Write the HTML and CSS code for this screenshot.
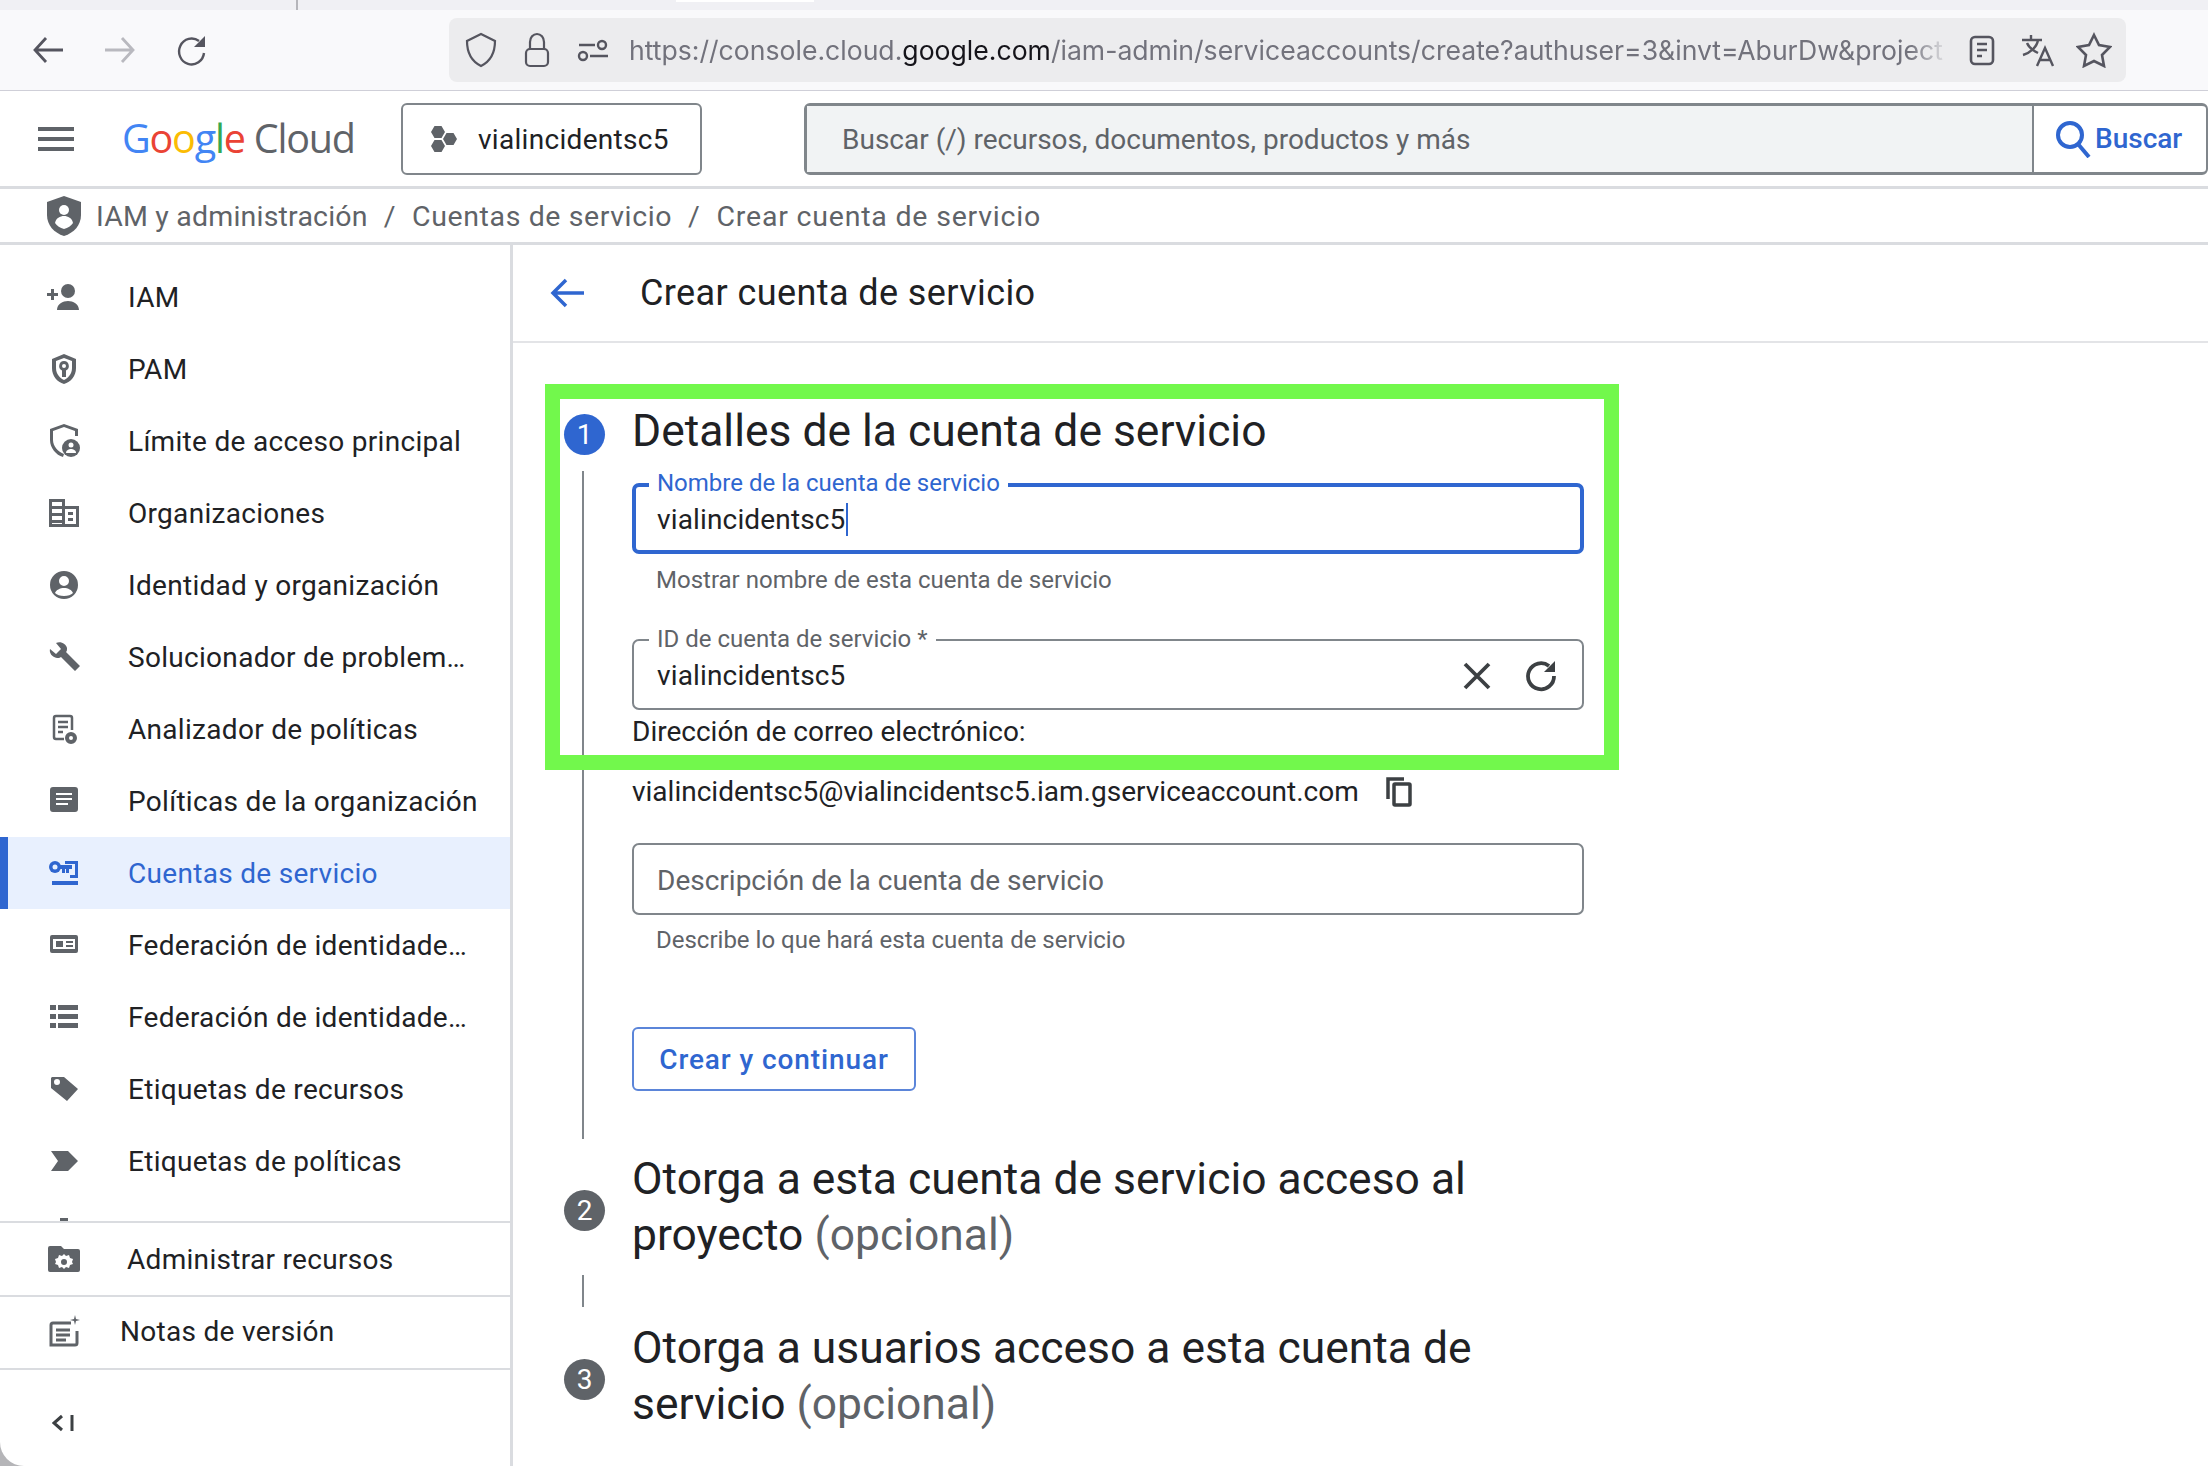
FILE: index.html
```html
<!DOCTYPE html>
<html lang="es">
<head>
    <meta charset="UTF-8">
    <title>Crear cuenta de servicio</title>
    <link rel="stylesheet" href="styles.css">
</head>
<body>
<div id="window">
    <div class="tabstrip"><span class="tab-sep"></span><span class="tab-white"></span></div>

    <div class="toolbar">
        <div class="nav-btns">
            <svg class="ic36" viewBox="0 0 36 36" fill="none" stroke="#55555f" stroke-width="2.8"><path d="M33 18H6M16 6 5 18l11 12"/></svg>
            <svg class="ic36" viewBox="0 0 36 36" fill="none" stroke="#b9b9bf" stroke-width="2.8"><path d="M3 18h27M20 6l11 12-11 12"/></svg>
            <svg class="ic36" viewBox="0 0 36 36" fill="none" stroke="#55555f" stroke-width="2.4"><path d="M30 21a12.500 13 0 1 1-5-12"/><path d="M31 4v11H20z" fill="#55555f" stroke="none"/></svg>
        </div>
        <div class="urlbar">
            <svg class="ic36" viewBox="0 0 36 36" fill="none" stroke="#55555f" stroke-width="2.2"><path d="M18 2 4 9c0 11 4 20 14 25 10-5 14-14 14-25z"/></svg>
            <svg class="ic36" viewBox="0 0 36 36" fill="none" stroke="#55555f" stroke-width="2.2"><path d="M11 17v-7a7 8 0 0 1 14 0v7"/><rect x="7" y="17" width="22" height="17" rx="4"/></svg>
            <svg class="ic36" viewBox="0 0 36 36" fill="none" stroke="#55555f" stroke-width="2.4"><path d="M4 13h16M15 24h18"/><circle cx="27" cy="13" r="4"/><circle cx="8" cy="24" r="4"/></svg>
            <div class="url"><span>https://console.cloud.</span><b>google.com</b><span>/iam-admin/serviceaccounts/create?authuser=3&amp;invt=AburDw&amp;project</span></div>
            <svg class="ic36" viewBox="0 0 36 36" fill="none" stroke="#55555f" stroke-width="2.6"><rect x="7" y="5" width="22" height="27" rx="4"/><path d="M13 12h10M13 18h10M13 24h5"/></svg>
            <svg class="ic36" viewBox="0 0 36 36" fill="none" stroke="#55555f" stroke-width="2.4"><path d="M2 8h20M11 3v5M18 8c-1 7-8 13-15 15M7 11c2 5 7 8 11 10M17 34l8-18 8 18M20 28h10"/></svg>
            <svg class="ic36" viewBox="0 0 36 36" fill="none" stroke="#55555f" stroke-width="2.6"><path d="m18 3 5 10 11 2-8 8 2 11-10-5-10 5 2-11-8-8 11-2z"/></svg>
        </div>
    </div>

    <div class="header">
        <svg class="menu" viewBox="0 0 36 24" fill="#5f6368"><path d="M0 0h36v4H0zM0 10h36v4H0zM0 20h36v4H0z"/></svg>
        <div class="logo"><i class="g-b">G</i><i class="g-r">o</i><i class="g-y">o</i><i class="g-b">g</i><i class="g-g">l</i><i class="g-r">e</i> <span>Cloud</span></div>
        <div class="project">
            <svg width="26" height="28" viewBox="0 0 26 28" fill="#5f6368"><path d="M3.500 1h7l3.500 6-3.500 6h-7L0 7zM15.500 8h7l3.500 6-3.500 6h-7L12 14zM3.500 15h7l3.500 6-3.500 6h-7L0 21z"/></svg>
            <span>vialincidentsc5</span>
        </div>
        <div class="search">
            <div class="search-input">Buscar (/) recursos, documentos, productos y más</div>
            <div class="search-btn">
                <svg width="36" height="38" viewBox="0 0 36 38" fill="none" stroke="#2f66d0" stroke-width="4"><circle cx="15" cy="15" r="12"/><path d="m23 24 11 13"/></svg>
                <span>Buscar</span>
            </div>
        </div>
    </div>

    <div class="crumbs">
        <svg width="34" height="40" viewBox="0 0 34 40"><path fill="#5f6368" d="M17 0 0 6v13c0 10 7 18 17 21 10-3 17-11 17-21V6z"/><circle cx="17" cy="14" r="5" fill="#fff"/><path fill="#fff" d="M8 27c1-5 5-7 9-7s8 2 9 7c-2 3-5 5-9 6-4-1-7-3-9-6z"/></svg>
        <span class="crumb-first">IAM y administración</span><em>/</em><span>Cuentas de servicio</span><em>/</em><span class="crumb-last">Crear cuenta de servicio</span>
    </div>

    <div class="body">
        <div class="side">
            <div class="side-list">
                <div class="side-item"><svg class="ic" viewBox="0 0 34 26" fill="#5f6368"><circle cx="21" cy="7" r="7"/><path d="M10 26c0-6 6-9 11-9s11 3 11 9zM0 9h4V5h3v4h4v3H7v4H4v-4H0z"/></svg><span>IAM</span></div>
                <div class="side-item"><svg class="ic" viewBox="0 0 34 34" fill="#5f6368"><path fill-rule="evenodd" d="M17 2 5 7v9c0 8 5 14 12 16 7-2 12-8 12-16V7zm0 4 8 3v7c0 6-4 10-8 12-4-2-8-6-8-12V9z"/><path fill-rule="evenodd" d="M17 9a5 5 0 0 1 2 9.500V25h-4v-6.500A5 5 0 0 1 17 9zm0 3a2 2 0 1 0 0 4 2 2 0 0 0 0-4z"/></svg><span>PAM</span></div>
                <div class="side-item"><svg class="ic" viewBox="0 0 34 34" fill="#5f6368"><path d="M17 0 3 5v11c0 8 6 15 13 17l1-3c-6-2-11-8-11-14V7l11-4 11 4v5h3V5z"/><circle cx="24" cy="24" r="9"/><circle cx="24" cy="21" r="2.500" fill="#fff"/><path fill="#fff" d="M19 29c0-3 3-4 5-4s5 1 5 4z"/></svg><span>Límite de acceso principal</span></div>
                <div class="side-item"><svg class="ic" viewBox="0 0 34 34" fill="#5f6368"><path fill-rule="evenodd" d="M2 3h16v7h14v21H2zm3 3v4h10V6zm0 7v4h10v-4zm0 7v4h10v-4zm0 7v1h10v-1zm13-14v15h11V13zm3 3h5v3h-5zm0 6h5v3h-5z"/></svg><span>Organizaciones</span></div>
                <div class="side-item"><svg class="ic" viewBox="0 0 34 34" fill="#5f6368"><path fill-rule="evenodd" d="M17 3a14 14 0 1 1 0 28 14 14 0 0 1 0-28zm0 5a5 5 0 1 0 0 10 5 5 0 0 0 0-10zM8 25c2 2 5 3 9 3s7-1 9-3c-1-3-5-5-9-5s-8 2-9 5z"/></svg><span>Identidad y organización</span></div>
                <div class="side-item"><svg class="ic" viewBox="0 0 34 34" fill="#5f6368"><path d="M3 9l6 5 5-5-5-6c5-2 10 1 11 5 0 2 0 3-1 4l14 14-5 5-14-14c-1 1-3 1-4 1-5-1-8-5-7-9z"/></svg><span>Solucionador de problem…</span></div>
                <div class="side-item"><svg class="ic" viewBox="0 0 34 34" fill="none" stroke="#5f6368" stroke-width="2.500"><path d="M17 27H9a2 2 0 0 1-2-2V6a2 2 0 0 1 2-2h14a2 2 0 0 1 2 2v12M11 10h10M11 15h10M11 20h5"/><circle cx="24" cy="26" r="4" stroke-width="4"/></svg><span>Analizador de políticas</span></div>
                <div class="side-item"><svg class="ic" viewBox="0 0 34 34" fill="#5f6368"><path fill-rule="evenodd" d="M6 3h22a3 3 0 0 1 3 3v19a3 3 0 0 1-3 3H6a3 3 0 0 1-3-3V6a3 3 0 0 1 3-3zm3 6v2h16V9zm0 5v2h16v-2zm0 5v2h12v-2z"/></svg><span>Políticas de la organización</span></div>
                <div class="side-item on"><svg class="ic" viewBox="0 0 34 34" fill="#2f66d0"><path d="M18 5h13v17h-8v-3h5V8H18zM5 25h26v4H5z"/><circle cx="8" cy="11" r="6"/><circle cx="8" cy="11" r="2.500" fill="#e8f0fe"/><path d="M13 9h12v4h-3v4h-3v-4h-1v4h-3v-4h-2z"/></svg><span>Cuentas de servicio</span></div>
                <div class="side-item"><svg class="ic" viewBox="0 0 34 34" fill="#5f6368"><path fill-rule="evenodd" d="M5 7h24a2 2 0 0 1 2 2v14a2 2 0 0 1-2 2H5a2 2 0 0 1-2-2V9a2 2 0 0 1 2-2zm1 4v10h22V11zm3 2h7v6H9zm10 0h7v2h-7zm0 4h7v2h-7z"/></svg><span>Federación de identidade…</span></div>
                <div class="side-item"><svg class="ic" viewBox="0 0 34 34" fill="#5f6368"><path d="M3 5h6v5H3zM11 5h20v5H11zM3 14h6v5H3zM11 14h20v5H11zM3 23h6v5H3zM11 23h20v5H11z"/></svg><span>Federación de identidade…</span></div>
                <div class="side-item"><svg class="ic" viewBox="0 0 34 34" fill="#5f6368"><path fill-rule="evenodd" d="M5 5h12l14 12-11 12L4 16V6zm5 2a3 3 0 1 0 0 6 3 3 0 0 0 0-6z"/></svg><span>Etiquetas de recursos</span></div>
                <div class="side-item"><svg class="ic" viewBox="0 0 34 34" fill="#5f6368"><path d="M4 7h17l10 10-10 10H4l7-10z"/></svg><span>Etiquetas de políticas</span></div>
                <div class="side-item"><svg class="ic" viewBox="0 0 34 34" fill="#5f6368"><path d="M13 2h8v6h-8z"/></svg><span>Configuración</span></div>
            </div>
            <div class="side-foot">
                <svg class="ic" viewBox="0 0 34 34" fill="#5f6368"><path fill-rule="evenodd" d="M3 4h11l3 3h14a2 2 0 0 1 2 2v19a2 2 0 0 1-2 2H3a2 2 0 0 1-2-2V6a2 2 0 0 1 2-2zm14 8-2 2-3-1-1 3-3 1 1 3-1 2 3 1 1 3 3-1 2 2 2-2 3 1 1-3 3-1-1-2 1-3-3-1-1-3-3 1zm0 5a3 3 0 1 1 0 6 3 3 0 0 1 0-6z"/></svg>
                <span>Administrar recursos</span>
            </div>
            <div class="side-foot notes">
                <svg class="ic" viewBox="0 0 34 34" fill="none" stroke="#5f6368" stroke-width="3"><path d="M24 8H6a2 2 0 0 0-2 2v20h24a2 2 0 0 0 2-2V16M9 15h14M9 20h14M9 25h10"/><path d="m28 0 1 4 4 1-4 1-1 4-1-4-4-1 4-1z" fill="#5f6368" stroke="none"/></svg>
                <span>Notas de versión</span>
            </div>
            <div class="collapse">
                <svg width="22" height="18" viewBox="0 0 22 18" fill="none" stroke="#3c4043" stroke-width="3"><path d="M10 2 2 9l8 7M20 1v16"/></svg>
            </div>
        </div>

        <div class="main">
            <div class="page-title">
                <svg width="36" height="36" viewBox="0 0 36 36" fill="none" stroke="#2f66d0" stroke-width="3.500"><path d="M34 18H3M16 5 3 18l13 13"/></svg>
                <h1>Crear cuenta de servicio</h1>
            </div>

            <div class="stepper">
                <div class="step-head">
                    <div class="num num-on">1</div>
                    <h2>Detalles de la cuenta de servicio</h2>
                </div>
                <div class="step-body">
                    <div class="field focus">
                        <label>Nombre de la cuenta de servicio</label>
                        <div class="value">vialincidentsc5<span class="caret"></span></div>
                    </div>
                    <div class="hint hint1">Mostrar nombre de esta cuenta de servicio</div>
                    <div class="field f2">
                        <label>ID de cuenta de servicio *</label>
                        <div class="value">vialincidentsc5</div>
                        <svg class="fld-ic" viewBox="0 0 36 36" fill="none" stroke="#3c4043" stroke-width="3.800"><path d="m6 6 24 24M30 6 6 30"/></svg>
                        <svg class="fld-ic" viewBox="0 0 36 36" fill="none" stroke="#3c4043" stroke-width="3.800"><path d="M31 18a13 13 0 1 1-5-10"/><path d="M32 3v11H21z" fill="#3c4043" stroke="none"/></svg>
                    </div>
                    <div class="mail-label">Dirección de correo electrónico:</div>
                    <div class="mail">
                        <span>vialincidentsc5@vialincidentsc5.iam.gserviceaccount.com</span>
                        <svg width="28" height="30" viewBox="0 0 28 30" fill="none" stroke="#3c4043" stroke-width="3.500"><path d="M2 22V2h16"/><rect x="8" y="7" width="16" height="21" rx="1"/></svg>
                    </div>
                    <div class="field f3"><div class="value ph">Descripción de la cuenta de servicio</div></div>
                    <div class="hint hint3">Describe lo que hará esta cuenta de servicio</div>
                    <button class="btn">Crear y continuar</button>
                </div>
                <div class="step-head two">
                    <div class="num">2</div>
                    <h2>Otorga a esta cuenta de servicio acceso al proyecto <span>(opcional)</span></h2>
                </div>
                <div class="step-gap"></div>
                <div class="step-head two">
                    <div class="num">3</div>
                    <h2>Otorga a usuarios acceso a esta cuenta de servicio <span>(opcional)</span></h2>
                </div>
            </div>

            <div class="green-box"></div>
        </div>
    </div>
</div>
</body>
</html>
```

FILE: styles.css
```css
*{
    margin: 0;
    padding: 0;
    box-sizing: border-box;
}
html, body{
    width: 2208px;
    height: 1466px;
    overflow: hidden;
    background: #b5b5b8;
}
#window{
    width: 2208px;
    height: 1466px;
    background: #fff;
    border-bottom-left-radius: 24px;
    overflow: hidden;
    font-family: Roboto, "Liberation Sans", sans-serif;
    color: #202124;
    display: flex;
    flex-direction: column;
}

/* browser chrome */
.tabstrip{
    height: 10px;
    background: #f0f0f4;
    display: flex;
    padding-left: 296px;
}
.tab-sep{
    width: 2px;
    height: 10px;
    background: #b5b5ba;
}
.tab-white{
    width: 138px;
    height: 2px;
    margin-left: 378px;
    background: #fff;
}
.toolbar{
    height: 81px;
    background: #f9f9fb;
    border-bottom: 1px solid #cfcfd8;
    display: flex;
    align-items: center;
    padding: 0 82px 0 30px;
}
.ic36{
    width: 36px;
    height: 36px;
    flex: none;
}
.nav-btns{
    display: flex;
    gap: 36px;
    width: 419px;
}
.urlbar{
    flex: 1;
    height: 64px;
    background: #ececee;
    border-radius: 8px;
    display: flex;
    align-items: center;
    padding: 0 14px;
    gap: 20px;
}
.url{
    width: 1320px;
    flex: none;
    margin: 0 -5px 0 -2px;
    white-space: nowrap;
    overflow: hidden;
    font-family: Inter, sans-serif;
    font-size: 26.600px;
    color: #72727c;
    -webkit-mask-image: linear-gradient(to right, #000 97%, transparent);
    mask-image: linear-gradient(to right, #000 97%, transparent);
}
.url b{
    font-weight: 400;
    color: #15141a;
}

/* console header */
.header{
    height: 98px;
    border-bottom: 3px solid #dadce0;
    display: flex;
    align-items: center;
    padding-left: 38px;
}
.menu{
    width: 36px;
    height: 24px;
}
.logo{
    width: 279px;
    margin: -2px 0 0 48px;
    font-family: "Open Sans", sans-serif;
    font-size: 39.500px;
    letter-spacing: -1.2px;
    white-space: nowrap;
}
.logo i{ font-style: normal; }
.logo span{ color: #5f6368; }
.g-b{ color: #4285f4; }
.g-r{ color: #ea4335; }
.g-y{ color: #fbbc04; }
.g-g{ color: #34a853; }
.project{
    width: 301px;
    height: 72px;
    border: 2px solid #80868b;
    border-radius: 6px;
    display: flex;
    align-items: center;
    gap: 21px;
    padding: 0 0 0 28px;
    font-size: 28px;
    letter-spacing: .3px;
}
.project span{
    padding-top: 2px;
}
.search{
    width: 1404px;
    height: 72px;
    margin-left: 102px;
    border: 3px solid #80868b;
    border-right-width: 2px;
    border-radius: 6px;
    display: flex;
}
.search-input{
    width: 1227px;
    background: #f1f3f4;
    border-right: 2px solid #80868b;
    padding-left: 35px;
    line-height: 67px;
    font-size: 28px;
    color: #5f6368;
}
.search-btn{
    flex: 1;
    display: flex;
    align-items: center;
    gap: 4px;
    padding-left: 21px;
    font-size: 28px;
    font-weight: 500;
    color: #2f66d0;
}

/* breadcrumbs */
.crumbs{
    height: 56px;
    border-bottom: 3px solid #dadce0;
    display: flex;
    align-items: center;
    padding: 0 0 0 47px;
    font-size: 28.500px;
    letter-spacing: .6px;
    color: #5f6368;
}
.crumbs svg{
    margin-right: 15px;
}
.crumbs span{
    padding-top: 2px;
}
.crumbs em{
    font-style: normal;
    margin: 2px 16px 0;
}
.crumb-first{ letter-spacing: .2px; }
.crumb-last{ letter-spacing: .8px; }

.body{
    flex: 1;
    display: flex;
    min-height: 0;
}

/* left nav */
.side{
    width: 513px;
    flex: none;
    border-right: 3px solid #dadce0;
    display: flex;
    flex-direction: column;
}
.side-list{
    height: 978px;
    padding-top: 16px;
    overflow: hidden;
    border-bottom: 2px solid #dadce0;
    flex: none;
}
.side-item{
    height: 72px;
    display: flex;
    align-items: center;
    padding-left: 47px;
    font-size: 28px;
    letter-spacing: .3px;
    white-space: nowrap;
}
.ic{
    width: 34px;
    height: 34px;
    flex: none;
    margin-right: 47px;
}
.side-item.on{
    background: #e8f0fe;
    border-left: 8px solid #2f66d0;
    padding-left: 39px;
    color: #2f66d0;
}
.side-foot{
    height: 74px;
    border-bottom: 2px solid #dadce0;
    display: flex;
    align-items: center;
    padding-left: 47px;
    font-size: 28px;
    letter-spacing: .3px;
}
.side-foot .ic{ margin-right: 46px; }
.side-foot.notes{
    height: 73px;
    padding-bottom: 2px;
}
.side-foot.notes .ic{ margin-right: 39px; }
.collapse{
    padding: 44px 0 0 52px;
}

/* main column */
.main{
    flex: 1;
    position: relative;
}
.page-title{
    height: 98px;
    border-bottom: 2px solid #e3e4e7;
    display: flex;
    align-items: center;
    padding-left: 37px;
}
.page-title h1{
    margin-left: 54px;
    font-size: 36px;
    font-weight: 400;
    letter-spacing: .4px;
}
.stepper{
    padding: 60px 0 0 51px;
    width: 1100px;
}
.step-head{
    display: flex;
    align-items: center;
    width: 960px;
}
.step-head h2{
    font-size: 44.400px;
    font-weight: 400;
    line-height: 56px;
}
.step-head h2 span{
    color: #5f6368;
}
.num{
    width: 41px;
    height: 41px;
    flex: none;
    margin: 6px 27px 0 0;
    border-radius: 50%;
    background: #5f6368;
    color: #fff;
    text-align: center;
    font-size: 28px;
    line-height: 41px;
}
.num-on{
    background: #2f66d0;
}
.step-body{
    margin: 12px 0 0 18px;
    padding: 12px 0 0 48px;
    height: 668px;
    border-left: 2px solid #80868b;
    width: 1024px;
}
.two{
    margin-top: 12px;
}
.step-gap{
    margin: 12px 0 13px 18px;
    height: 32px;
    border-left: 2px solid #80868b;
}
.field{
    width: 952px;
    height: 71px;
    border: 2px solid #80868b;
    border-radius: 7px;
    padding: 2px 0 0 23px;
    display: flex;
    align-items: center;
    position: relative;
    font-size: 28px;
    letter-spacing: .15px;
}
.field label{
    position: absolute;
    top: -15px;
    left: 15px;
    padding: 0 8px;
    background: #fff;
    font-size: 24px;
    line-height: 26px;
    letter-spacing: 0;
    color: #5f6368;
}
.field.focus{
    border: 4px solid #2f66d0;
    padding-left: 21px;
}
.field.focus label{
    color: #2f66d0;
    left: 13px;
    top: -17px;
}
.value{
    flex: 1;
    display: flex;
    align-items: center;
}
.ph{ color: #5f6368; letter-spacing: 0; }
.caret{
    width: 2px;
    height: 33px;
    background: #2f66d0;
}
.fld-ic{
    width: 36px;
    height: 36px;
    margin-right: 28px;
}
.fld-ic:last-child{
    margin-right: 23px;
}
.hint{
    margin-left: 24px;
    font-size: 24px;
    line-height: 28px;
    color: #5f6368;
}
.hint1{ margin-top: 12px; }
.f2{ margin-top: 45px; }
.mail-label{
    margin-top: 6px;
    font-size: 28px;
    line-height: 32px;
}
.mail{
    margin-top: 28px;
    display: flex;
    align-items: center;
    gap: 27px;
    font-size: 28px;
    line-height: 32px;
}
.f3{ margin-top: 35px; height: 72px; }
.hint3{ margin-top: 11px; }
.btn{
    display: block;
    margin-top: 73px;
    width: 284px;
    height: 64px;
    background: #fff;
    border: 2px solid #5b85d9;
    border-radius: 6px;
    font-family: inherit;
    font-size: 28px;
    font-weight: 500;
    letter-spacing: .9px;
    color: #2f66d0;
}
.green-box{
    position: absolute;
    left: 32px;
    top: 139px;
    width: 1074px;
    height: 386px;
    border: 15px solid #72f84c;
}
```
